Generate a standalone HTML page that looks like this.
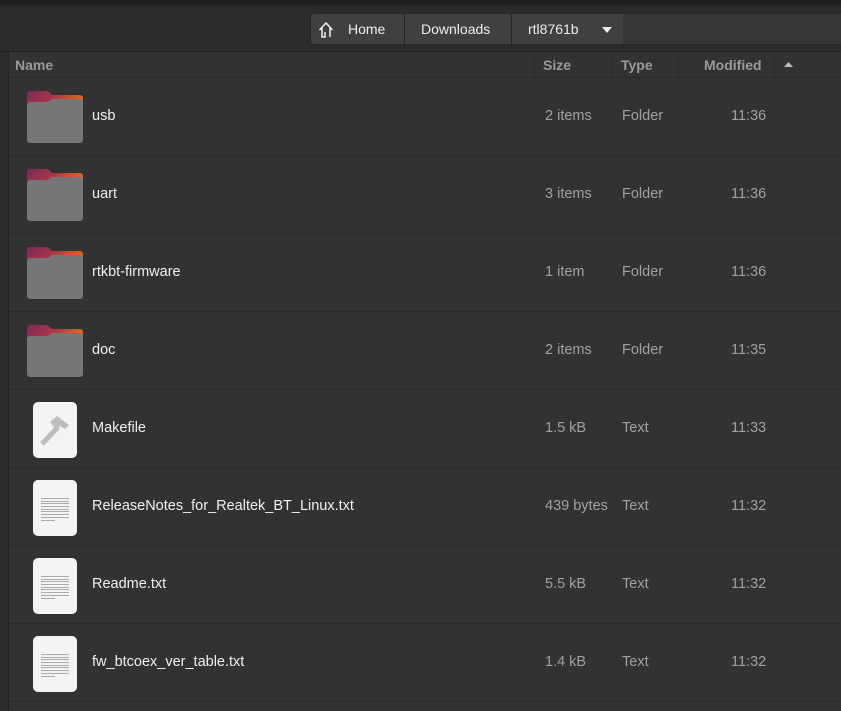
<!DOCTYPE html>
<html><head><style>
*{margin:0;padding:0;box-sizing:border-box}
body{width:841px;height:711px;overflow:hidden;background:#323232;font-family:"Liberation Sans","DejaVu Sans",sans-serif;position:relative;color:#eee}
.top{position:absolute;left:0;top:0;width:841px;height:6px;background:#1d1d1d;border-bottom:1px solid #262626}
.hb{position:absolute;left:0;top:6px;width:841px;height:46px;background:#2b2b2b;border-bottom:1px solid #202020}
.crumb{position:absolute;top:13px;height:32px;background:#404040;border:1px solid #262626;display:flex;align-items:center;font-size:14px;color:#ededed}
.side{position:absolute;left:0;top:52px;width:9px;height:659px;background:#2b2b2b;border-right:1px solid #222}
.colh{position:absolute;left:9px;top:52px;width:832px;height:26px;background:#323232;border-bottom:1px solid #2a2a2a;font-size:14px;font-weight:bold;color:#9a9a9a}
.colh span{position:absolute;top:5px}
.sep{position:absolute;top:0;width:1px;height:25px;background:#2a2a2a}
.row{position:absolute;left:9px;width:832px;height:78px;border-bottom:1px solid #2a2a2a;font-size:14.5px}
.row .n{position:absolute;left:83px;top:30px;color:#f0f0f0}
.row .s{position:absolute;left:536px;top:30px;color:#a0a0a0}
.row .t{position:absolute;left:613px;top:30px;color:#a0a0a0}
.row .m{position:absolute;left:722px;top:30px;color:#a0a0a0}
.fold{position:absolute;left:18px;top:13px;width:56px;height:52px}
.doc{position:absolute;left:24px;top:12px;width:44px;height:56px;background:#f4f4f4;border-radius:5px}
.lines{position:absolute;left:8px;top:18px;width:28px}
.lines i{display:block;height:1px;background:#aaa;margin-bottom:1.7px}
</style></head><body>
<div class="top"></div>
<div class="hb"></div>
<div class="crumb" style="left:310px;width:95px;border-radius:4px 0 0 4px">
<svg style="position:absolute;left:7px;top:7px" width="16" height="18" viewBox="0 0 16 18"><path d="M1.5 9 L8 2 L14.5 9 M4 7 V16 H7 V11 M12 7 V16" fill="none" stroke="#f0f0f0" stroke-width="1.5"/></svg>
<span style="position:absolute;left:37px">Home</span></div>
<div class="crumb" style="left:404px;width:108px"><span style="position:absolute;left:16px">Downloads</span></div>
<div class="crumb" style="left:511px;width:113px"><span style="position:absolute;left:16px">rtl8761b</span>
<svg style="position:absolute;left:90px;top:13px" width="10" height="6"><path d="M0 0H10L5 6Z" fill="#eee"/></svg></div>
<div class="crumb" style="left:623px;width:220px;background:#363636;border-left:none"></div>
<div class="side"></div>
<div class="colh">
<span style="left:6px">Name</span><div class="sep" style="left:525px"></div>
<span style="left:534px">Size</span><div class="sep" style="left:603px"></div>
<span style="left:612px">Type</span><div class="sep" style="left:669px"></div>
<span style="left:695px">Modified</span><div class="sep" style="left:765px"></div>
<svg style="position:absolute;left:775px;top:10px" width="9" height="5"><path d="M0 5H9L4.5 0Z" fill="#bbb"/></svg>
</div>
<div id="rows"></div>
<script>
var d=[["usb","2 items","Folder","11:36",0],["uart","3 items","Folder","11:36",0],["rtkbt-firmware","1 item","Folder","11:36",0],["doc","2 items","Folder","11:35",0],["Makefile","1.5 kB","Text","11:33",1],["ReleaseNotes_for_Realtek_BT_Linux.txt","439 bytes","Text","11:32",2],["Readme.txt","5.5 kB","Text","11:32",2],["fw_btcoex_ver_table.txt","1.4 kB","Text","11:32",2]];
var h="";
d.forEach(function(r,i){
var ic;
if(r[4]==0) ic='<svg class="fold" viewBox="0 0 56 52"><defs><linearGradient id="g'+i+'" x1="0" x2="1" y1="0" y2="0.3"><stop offset="0" stop-color="#7a2a5a"/><stop offset="0.5" stop-color="#a8344a"/><stop offset="1" stop-color="#e8601c"/></linearGradient></defs><path d="M3 0H21L25 4H53A3 3 0 0 1 56 7V16H0V3A3 3 0 0 1 3 0Z" fill="url(#g'+i+')"/><path d="M3 11H21L25 8H53A3 3 0 0 1 56 11V49A3 3 0 0 1 53 52H3A3 3 0 0 1 0 49V14A3 3 0 0 1 3 11Z" fill="#767676"/></svg>';
else if(r[4]==1) ic='<div class="doc"><svg style="position:absolute;left:5px;top:12px" width="34" height="34" viewBox="0 0 34 34"><path d="M4 30L20 13" stroke="#bdbdbd" stroke-width="5"/><path d="M12 8L19 2L31 11L27 15L22 12L18 16Z" fill="#bdbdbd"/></svg></div>';
else ic='<div class="doc"><div class="lines">'+'<i></i>'.repeat(8)+'<i style="width:14px"></i></div></div>';
h+='<div class="row" style="top:'+(78+i*78)+'px">'+ic+'<span class="n">'+r[0]+'</span><span class="s">'+r[1]+'</span><span class="t">'+r[2]+'</span><span class="m">'+r[3]+'</span></div>';
});
document.getElementById("rows").innerHTML=h;
</script>
</body></html>
